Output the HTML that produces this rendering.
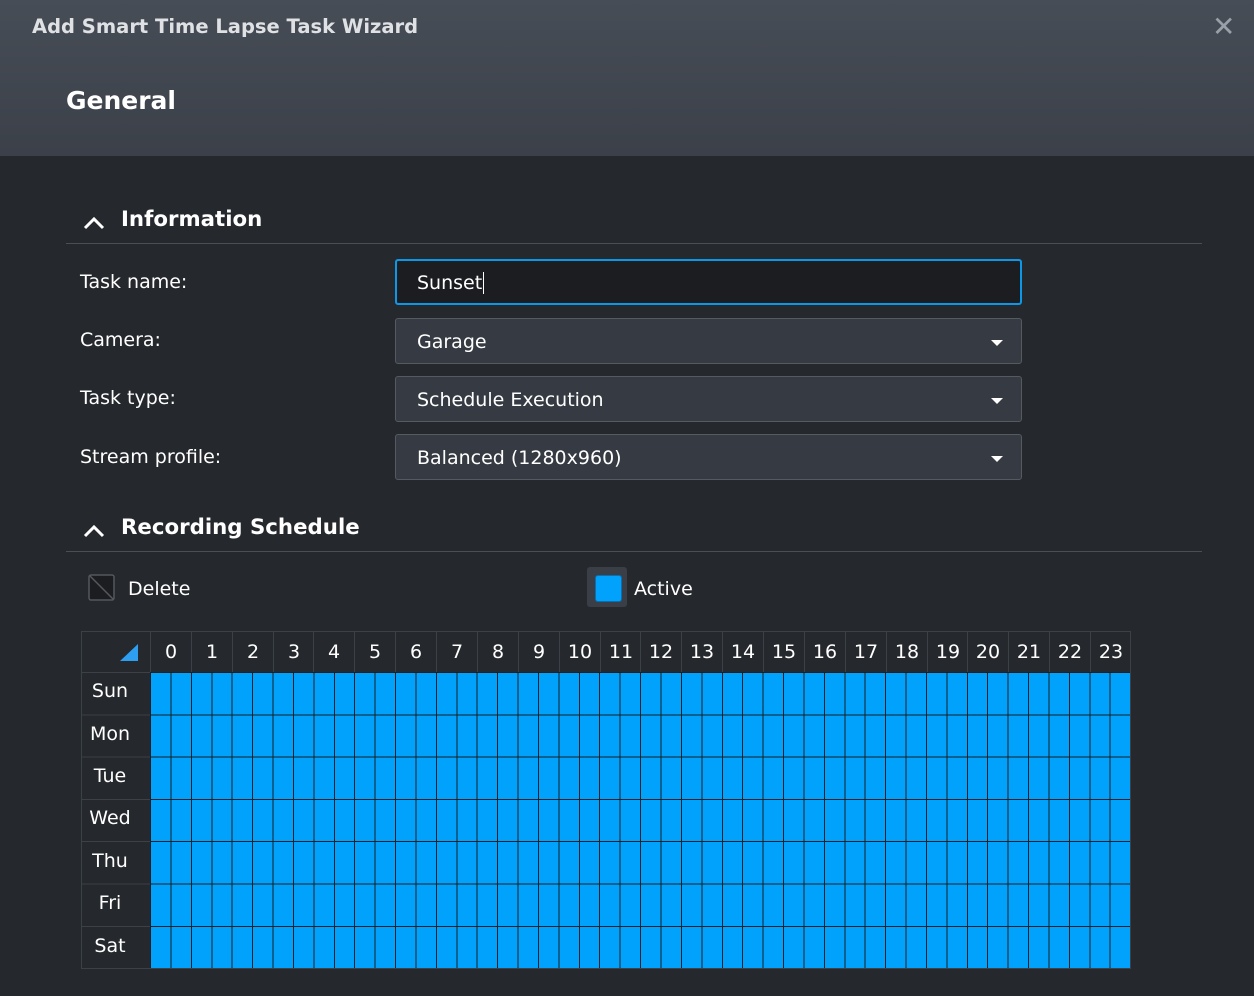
<!DOCTYPE html>
<html><head><style>
body{margin:0;width:1254px;height:996px;background:#25282d;font-family:"DejaVu Sans","Liberation Sans",sans-serif;color:#fff;position:relative;overflow:hidden}
.hdr{position:absolute;left:0;top:0;width:1254px;height:156px;background:linear-gradient(180deg,#474d56,#3b4049)}
.t{position:absolute;white-space:nowrap}
.sec{position:absolute;left:66px;width:1136px;border-bottom:1px solid #4a4e55;height:44px}
.lbl{position:absolute;left:80px;font-size:19px}
.box{position:absolute;left:395px;width:627px;height:46px;box-sizing:border-box;border:1px solid #555a61;border-radius:3px;background:#363b43;font-size:19px;line-height:46px;padding-left:21px}
.dd:after{content:"";position:absolute;right:18px;top:21px;border-left:6px solid transparent;border-right:6px solid transparent;border-top:6px solid #fff}
.grid{position:absolute;left:81px;top:631px;width:1048px;height:336px;border:1px solid #3c4047;background:#25282d}
.hd{position:absolute;top:0;height:40px;width:40px;border-left:1px solid #3c4047;text-align:center;font-size:19px;line-height:40px}
.day{position:absolute;left:0;width:56px;text-align:center;font-size:19px}
.cells{position:absolute;left:68px;top:40px;width:980px;height:296px;background:
repeating-linear-gradient(90deg,#1c1f23 0 1px,transparent 1px 20.42px),
repeating-linear-gradient(180deg,#1c1f23 0 1px,transparent 1px 42.3px),#00a2fc}
</style></head><body>
<div class="hdr"></div>
<div class="t" style="left:32px;top:15px;font-size:19.5px;font-weight:bold;color:#dfe1e4">Add Smart Time Lapse Task Wizard</div>
<div class="t" style="left:1212px;top:10px;font-size:28px;color:#9aa0a8;font-family:'Liberation Sans'">✕</div>
<div class="t" style="left:66px;top:86px;font-size:25px;font-weight:bold">General</div>

<div class="sec" style="top:199px"></div>
<svg class="t" style="left:82px;top:213px" width="24" height="20"><path d="M3 15 L12 6 L21 15" stroke="#fff" stroke-width="3" fill="none"/></svg>
<div class="t" style="left:121px;top:207px;font-size:21.3px;font-weight:bold">Information</div>

<div class="lbl" style="top:271px">Task name:</div>
<div class="lbl" style="top:329px">Camera:</div>
<div class="lbl" style="top:387px">Task type:</div>
<div class="lbl" style="top:446px">Stream profile:</div>
<div class="box" style="top:259px;border:2px solid #0c98e8;background:#1b1d21;line-height:44px;padding-left:20px">Sunset<span style="border-left:1px solid #fff;margin-left:1px"></span></div>
<div class="box dd" style="top:318px">Garage</div>
<div class="box dd" style="top:376px">Schedule Execution</div>
<div class="box dd" style="top:434px">Balanced (1280x960)</div>

<div class="sec" style="top:507px"></div>
<svg class="t" style="left:82px;top:521px" width="24" height="20"><path d="M3 15 L12 6 L21 15" stroke="#fff" stroke-width="3" fill="none"/></svg>
<div class="t" style="left:121px;top:515px;font-size:21.3px;font-weight:bold">Recording Schedule</div>

<svg class="t" style="left:88px;top:574px" width="27" height="27"><rect x="1" y="1" width="25" height="25" rx="2" fill="#1b1d21" stroke="#55595f" stroke-width="1.5"/><path d="M2 2 L25 25" stroke="#55595f" stroke-width="1.5"/></svg>
<div class="t" style="left:128px;top:578px;font-size:19px">Delete</div>
<div class="t" style="left:587px;top:567px;width:40px;height:40px;background:#3a3f47;border-radius:3px"></div>
<div class="t" style="left:595px;top:575px;width:25px;height:25px;background:#00a2fc;border:1px solid #0a6fb0;border-radius:3px"></div>
<div class="t" style="left:634px;top:578px;font-size:19px">Active</div>

<div class="grid">
<svg class="t" style="left:38px;top:12px" width="20" height="18"><path d="M18 0 L18 17 L0 17 Z" fill="#2e9ef0"/></svg>
<div class="hd" style="left:68px">0</div><div class="hd" style="left:109px">1</div><div class="hd" style="left:150px">2</div><div class="hd" style="left:191px">3</div><div class="hd" style="left:231px">4</div><div class="hd" style="left:272px">5</div><div class="hd" style="left:313px">6</div><div class="hd" style="left:354px">7</div><div class="hd" style="left:395px">8</div><div class="hd" style="left:436px">9</div><div class="hd" style="left:477px">10</div><div class="hd" style="left:518px">11</div><div class="hd" style="left:558px">12</div><div class="hd" style="left:599px">13</div><div class="hd" style="left:640px">14</div><div class="hd" style="left:681px">15</div><div class="hd" style="left:722px">16</div><div class="hd" style="left:763px">17</div><div class="hd" style="left:804px">18</div><div class="hd" style="left:845px">19</div><div class="hd" style="left:885px">20</div><div class="hd" style="left:926px">21</div><div class="hd" style="left:967px">22</div><div class="hd" style="left:1008px">23</div>
<div class="day" style="top:48px">Sun</div><div class="day" style="top:91px">Mon</div><div class="day" style="top:133px">Tue</div><div class="day" style="top:175px">Wed</div><div class="day" style="top:218px">Thu</div><div class="day" style="top:260px">Fri</div><div class="day" style="top:303px">Sat</div>
<div style="position:absolute;left:0;top:40px;width:68px;height:296px;background:repeating-linear-gradient(180deg,#3c4047 0 1px,transparent 1px 42.3px)"></div>
<div class="cells"></div>
</div>
</body></html>
